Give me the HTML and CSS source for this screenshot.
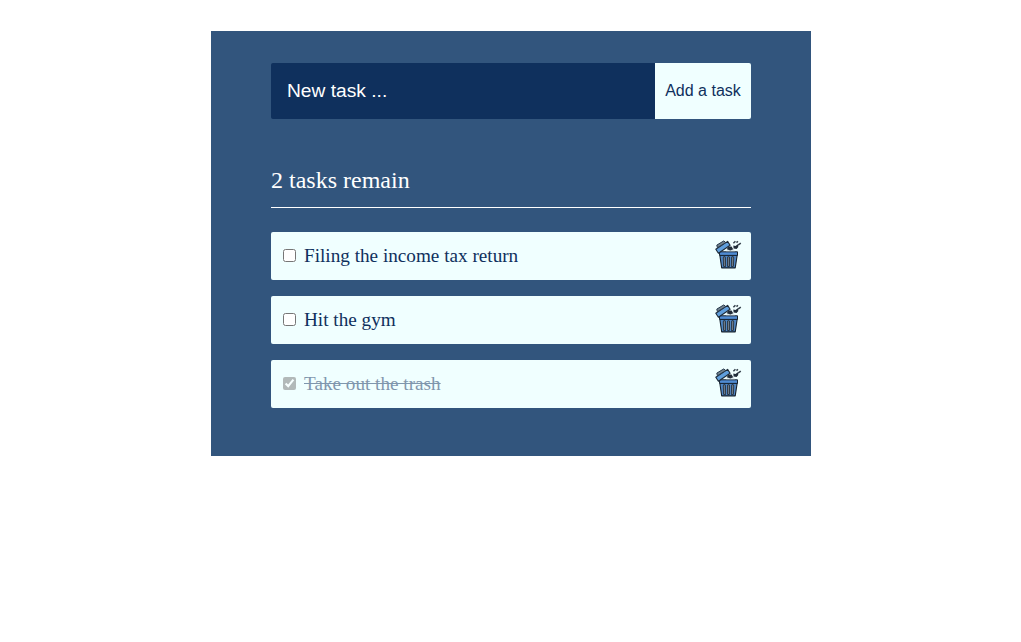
FILE: index.html
```html
<!DOCTYPE html>
<html lang="en">
<head>
<meta charset="utf-8">
<title>Tasks</title>
<link rel="stylesheet" href="styles.css">
</head>
<body>
<svg class="sprite" aria-hidden="true">
  <symbol id="trash" viewBox="0 0 28 30">
    <path d="M4.8 15h17.4l-2 12.9H6.7z" fill="#4f86c4" stroke="#15202c" stroke-width="1.1" stroke-linejoin="round"/>
    <path d="M4.2 11.8h18.3v3.6H4.7z" fill="#4f8bd2" stroke="#15202c" stroke-width="1" stroke-linejoin="round"/>
    <path d="M9.3 17.8l.3 7.8M13.5 17.8v7.8M17.7 17.8l-.3 7.8" stroke="#1b2836" stroke-width="3" stroke-linecap="round"/>
    <path d="M9.3 17.8l.3 7.8M13.5 17.8v7.8M17.7 17.8l-.3 7.8" stroke="#6d7a88" stroke-width="1.5" stroke-linecap="round"/>
    <path d="M.8 9.3L12.6 1.4l2.5 3.9L3.4 13.2z" fill="#5f9edc" stroke="#1c2a38" stroke-width="1.1" stroke-linejoin="round"/>
    <path d="M2.4 7.7L1.8 5.1 8.8 .9l2 1.7z" fill="#71828f" stroke="#26384b" stroke-width="1"/>
    <path d="M11 11.3l3.4-3.4 4 .6 1.5 2.8z" fill="#dce9ed"/>
    <path d="M11.7 9.2l1.8-2.8 3.1.1 1.6 2.7-2.8 1.4z" fill="#222d39"/>
    <path d="M18.3 5.5l2.2.6 2.3-1.9.5 2.8-1.7 1.9-3-.5z" fill="#202c39"/>
    <path d="M18.4 3.2l2-2M21.5 2.6l1.4-1.4M23 5.1l2.8-2" stroke="#35414c" stroke-width="1.5"/>
  </symbol>
</svg>
<main class="app">
  <form class="task-form">
    <input class="task-input" type="text" placeholder="New task ..." aria-label="New task">
    <button class="add-button" type="button">Add a task</button>
  </form>
  <h2 class="summary">2 tasks remain</h2>
  <ul class="tasks">
    <li class="task">
      <label class="task-label"><input class="check" type="checkbox">Filing the income tax return</label>
      <svg class="trash" role="img" aria-label="Delete"><use href="#trash"/></svg>
    </li>
    <li class="task">
      <label class="task-label"><input class="check" type="checkbox">Hit the gym</label>
      <svg class="trash" role="img" aria-label="Delete"><use href="#trash"/></svg>
    </li>
    <li class="task">
      <label class="task-label task-done"><input class="check" type="checkbox" checked>Take out the trash</label>
      <svg class="trash" role="img" aria-label="Delete"><use href="#trash"/></svg>
    </li>
  </ul>
</main>
</body>
</html>
```

FILE: styles.css
```css
* { box-sizing: border-box; }
body {
  margin: 0;
  padding-top: 31px;
  font-family: "Liberation Serif", "Times New Roman", serif;
  background: #fff;
}
.sprite { display: none; }
.app {
  width: 600px;
  height: 425px;
  margin: 0 210px 0 211px;
  padding: 32px 60px 48px;
  background: #32557d;
}
.task-form { display: flex; height: 56px; }
.task-input {
  flex: 1;
  min-width: 0;
  padding: 0 16px;
  border: 0;
  border-radius: 2px 0 0 2px;
  background: #0f305d;
  color: #fff;
  font: 19.2px "Liberation Sans", Arial, sans-serif;
}
.task-input::placeholder { color: #fff; opacity: 1; }
.add-button {
  width: 96px;
  padding: 0;
  border: 0;
  border-radius: 0 2px 2px 0;
  background: azure;
  color: #0f305d;
  font: 16px "Liberation Sans", Arial, sans-serif;
}
.summary {
  height: 41px;
  margin: 48px 0 24px;
  border-bottom: 1px solid #fff;
  color: #fff;
  font-size: 24px;
  font-weight: 400;
  line-height: 27px;
}
.tasks {
  display: grid;
  gap: 16px;
  margin: 0;
  padding: 0;
  list-style: none;
}
.task {
  display: flex;
  align-items: center;
  justify-content: space-between;
  height: 48px;
  padding: 0 8px 0 12px;
  border-radius: 2px;
  background: azure;
}
.task-label {
  display: flex;
  align-items: center;
  gap: 8px;
  color: #0f305d;
  font-size: 19.2px;
}
.task-done { opacity: .5; text-decoration: line-through; }
.check {
  width: 13px;
  height: 13px;
  margin: 0 0 2px;
  accent-color: #767676;
}
.trash { width: 28px; height: 30px; margin-bottom: 2px; }
```
